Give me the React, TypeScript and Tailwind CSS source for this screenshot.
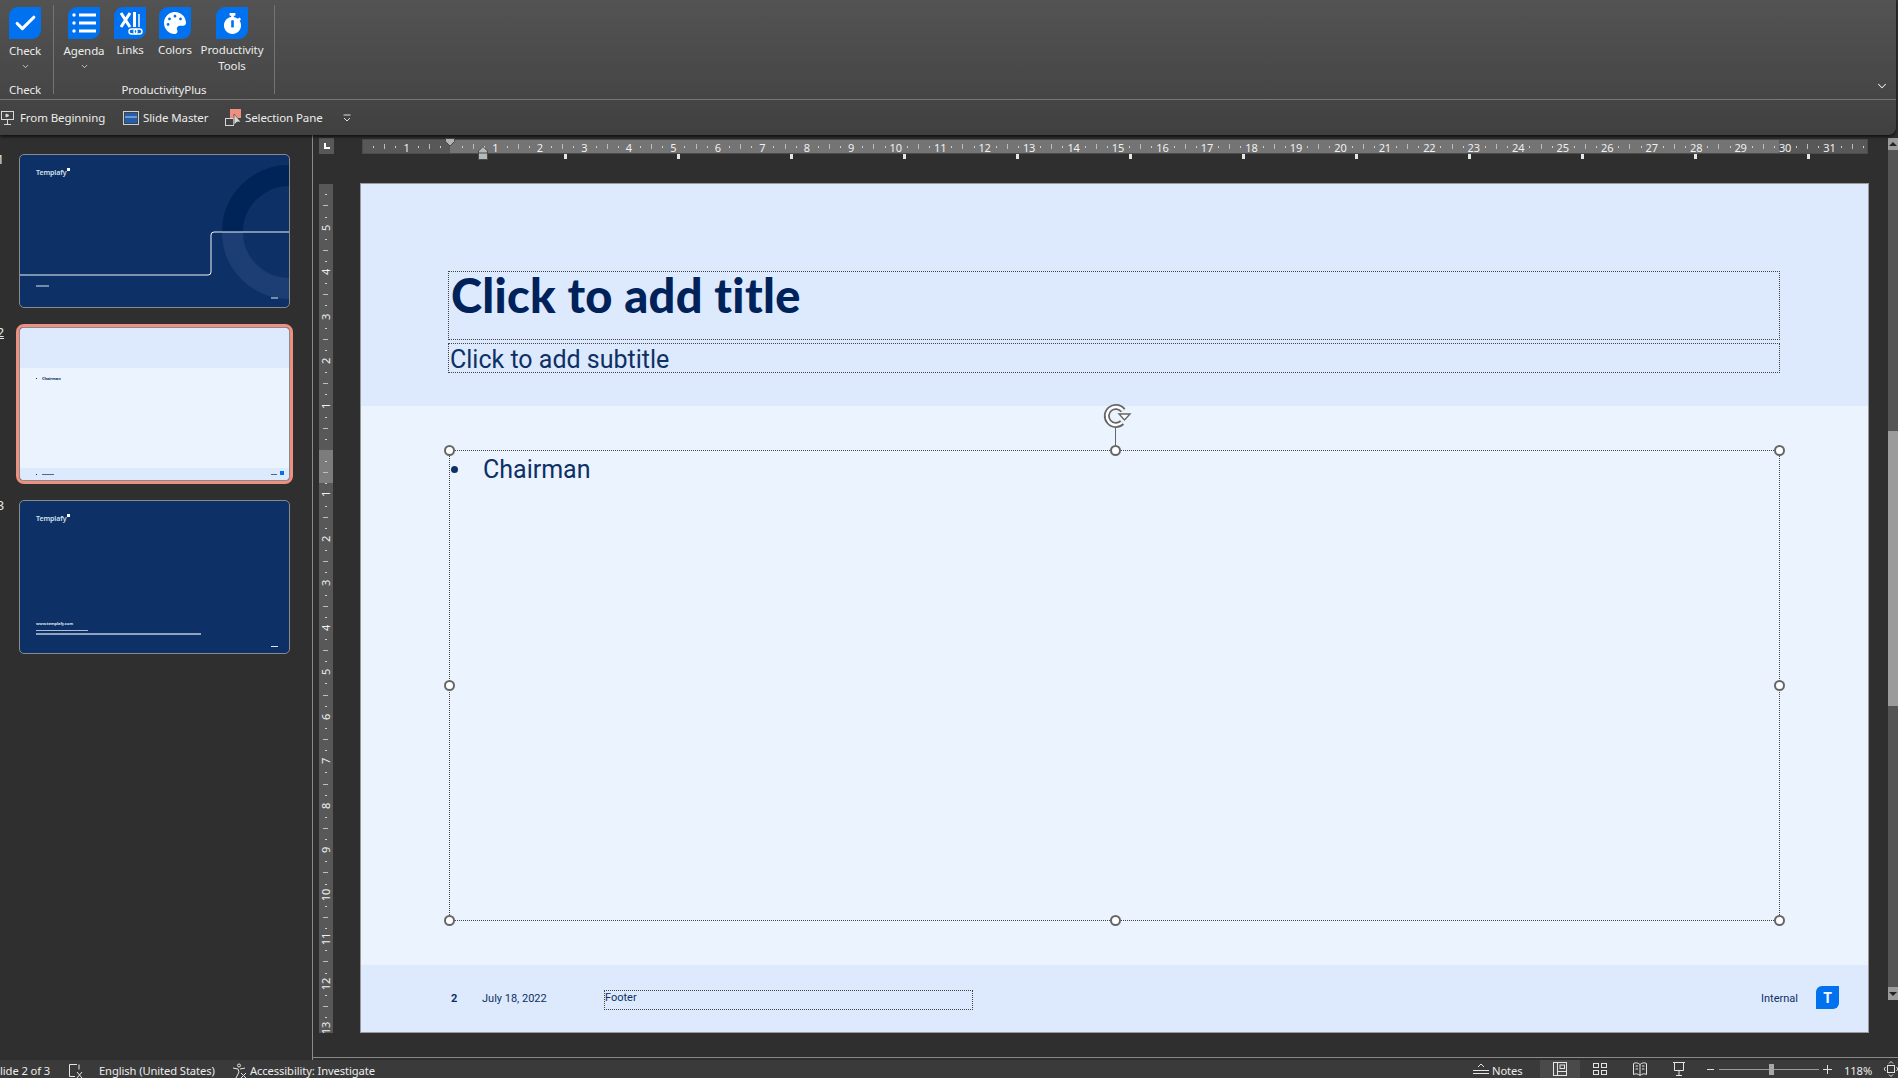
import React from 'react';
import { ChevronDown, Check } from 'lucide-react';
import { FaPalette, FaStopwatch } from 'react-icons/fa';

const CM = 44.47;

const BlueIcon = ({ children }: { children: React.ReactNode }) => (
  <div className="w-8 h-8 shrink-0 flex items-center justify-center bg-[#0072f0] rounded-tl-[9px] rounded-br-[9px] text-white">
    {children}
  </div>
);

const RibbonButton = ({ width, label, second, chevron, icon }: { width: string; label: string; second?: string; chevron?: boolean; icon: React.ReactNode }) => (
  <div className={`flex flex-col items-center pt-[7px] leading-4 ${width}`}>
    {icon}
    <span className={chevron ? 'mt-1' : 'mt-[3px]'}>{label}</span>
    {second && <span>{second}</span>}
    {chevron && <ChevronDown size={9} strokeWidth={2} className="mt-[3px]" />}
  </div>
);

const HorizontalRuler = () => {
  const zero = 88;
  const marks: React.ReactNode[] = [];
  for (let k = -2; k <= 31; k++) {
    const x = zero + k * CM;
    if (k !== 0 && x > 0) {
      marks.push(
        <span key={`n${k}`} className="absolute top-0 w-5 -ml-2.5 text-center text-[11px] leading-[15px] text-[#f0f0f0]" style={{ left: x }}>
          {Math.abs(k)}
        </span>
      );
    }
    [0.25, 0.5, 0.75].forEach((f) => {
      const tx = Math.round(x + f * CM);
      if (tx < 4 || tx > 1500) return;
      marks.push(
        <span
          key={`t${k}${f}`}
          className={f === 0.5 ? 'absolute top-[4px] h-[5px] w-px bg-[#bdbdbd]' : 'absolute top-[6px] h-[2px] w-px bg-[#cfcfcf]'}
          style={{ left: tx }}
        />
      );
    });
  }
  return (
    <div className="relative h-[15px] w-[1506px] ml-[2px] bg-[#585858] border border-[#4c4c4c] box-border">
      <div className="absolute top-0 bottom-0 left-[87px] w-[1329px] bg-[#747474]" />
      {marks}
    </div>
  );
};

const VerticalRuler = () => {
  const zero = 266;
  const marks: React.ReactNode[] = [];
  for (let k = -6; k <= 13; k++) {
    const y = zero + k * CM;
    if (k !== 0 && y > 0 && y < 846) {
      marks.push(
        <span key={`n${k}`} className="absolute left-0 w-[14px] h-4 -mt-2 -rotate-90 text-center text-[11px] leading-4 text-[#f0f0f0]" style={{ top: y }}>
          {Math.abs(k)}
        </span>
      );
    }
    [0.25, 0.5, 0.75].forEach((f) => {
      const ty = Math.round(y + f * CM);
      if (ty < 4 || ty > 844) return;
      marks.push(
        <span
          key={`t${k}${f}`}
          className={f === 0.5 ? 'absolute left-[4px] w-[5px] h-px bg-[#bdbdbd]' : 'absolute left-[6px] w-[2px] h-px bg-[#cfcfcf]'}
          style={{ top: ty }}
        />
      );
    });
  }
  return (
    <div className="relative w-[14px] h-[849px] bg-[#585858]">
      <div className="absolute left-0 right-0 top-[266px] h-[33px] bg-[#7c7c7c]" />
      {marks}
    </div>
  );
};

const Handle = ({ className }: { className: string }) => (
  <span className={`absolute w-[11px] h-[11px] rounded-full bg-white border-2 border-[#666666] ${className}`} />
);

const Logo = () => (
  <span className="absolute left-[16px] top-[13px] text-[7px] leading-[9px] font-semibold text-[#d8e0ec]">
    Templafy<span className="inline-block w-[3px] h-[3px] bg-white ml-px align-top" />
  </span>
);

const Thumb = ({ num, selected, children, className }: { num: string; selected?: boolean; children: React.ReactNode; className: string }) => (
  <div
    className={`relative w-[271px] h-[154px] ml-[19px] rounded-[5px] border border-[#8a8a8a] ${className} ${
      selected ? 'outline-[3px] outline-[#ee907f]' : ''
    }`}
  >
    <span className={`absolute right-[calc(100%+16px)] -top-[4px] text-[13px] leading-4 text-[#e6e6e6] ${selected ? 'underline' : ''}`}>{num}</span>
    <div className="absolute inset-0 overflow-hidden rounded-[4px]">{children}</div>
  </div>
);

const StatusIcon = ({ children }: { children: React.ReactNode }) => (
  <svg width="16" height="16" viewBox="0 0 16 16" fill="none" stroke="#e4e4e4" strokeWidth="1">
    {children}
  </svg>
);

export default function App() {
  const tabStops = [0, 1, 2, 3, 4, 5, 6, 7, 8, 9, 10, 11];

  return (
    <div className="w-[1898px] h-[1078px] overflow-hidden flex flex-col bg-[#2f2f2f] text-[11.5px] tracking-[-0.1px] text-[#ececec] font-['Noto_Sans','Open_Sans',sans-serif]">
      {/* Ribbon */}
      <div className="relative z-10 h-[135px] shrink-0 w-[1896px] rounded-br-lg bg-gradient-to-b from-[#535353] to-[#404040] shadow-[0_2px_3px_rgba(0,0,0,0.6)]">
        <div className="relative h-[100px] border-b border-[#767676] flex">
          <div className="w-[54px] h-[89px] mt-[5px] border-r border-[#747474] flex flex-col relative">
            <div className="-mt-[5px]">
              <RibbonButton width="w-[50px]" label="Check" chevron icon={<BlueIcon><Check size={25} strokeWidth={3} /></BlueIcon>} />
            </div>
            <span className="absolute bottom-[-4px] left-0 w-[50px] text-center leading-4">Check</span>
          </div>
          <div className="w-[221px] h-[89px] mt-[5px] border-r border-[#747474] relative flex pl-[7px]">
            <div className="flex -mt-[5px]">
              <RibbonButton
                width="w-[46px]"
                label="Agenda"
                chevron
                icon={
                  <BlueIcon>
                    <svg width="26" height="22" viewBox="0 0 26 22" fill="white">
                      <circle cx="3" cy="3" r="1.7" />
                      <circle cx="3" cy="11" r="1.7" />
                      <circle cx="3" cy="19" r="1.7" />
                      <rect x="8" y="1.5" width="17" height="3" />
                      <rect x="8" y="9.5" width="17" height="3" />
                      <rect x="8" y="17.5" width="17" height="3" />
                    </svg>
                  </BlueIcon>
                }
              />
              <RibbonButton
                width="w-[46px]"
                label="Links"
                icon={
                  <BlueIcon>
                    <svg width="30" height="30" viewBox="0 0 30 30" fill="none">
                      <path d="M6 5 L15 19 M15 5 L6 19" stroke="white" strokeWidth="3" />
                      <rect x="18" y="4" width="3" height="15" fill="white" />
                      <rect x="23" y="6" width="2" height="13" fill="#bcd8ff" />
                      <rect x="14" y="21" width="8" height="5" rx="2.5" stroke="white" strokeWidth="1.4" />
                      <rect x="19" y="21" width="8" height="5" rx="2.5" stroke="white" strokeWidth="1.4" />
                    </svg>
                  </BlueIcon>
                }
              />
              <RibbonButton width="w-[44px]" label="Colors" icon={<BlueIcon><FaPalette size={22} /></BlueIcon>} />
              <RibbonButton width="w-[70px]" label="Productivity" second="Tools" icon={<BlueIcon><FaStopwatch size={21} /></BlueIcon>} />
            </div>
            <span className="absolute bottom-[-4px] left-0 right-0 text-center leading-4">ProductivityPlus</span>
          </div>
          <ChevronDown size={14} strokeWidth={1.8} className="absolute left-[1875px] top-[79px]" />
        </div>

        {/* Quick access */}
        <div className="h-[35px] flex items-center leading-4">
          <svg width="14" height="16" viewBox="0 0 14 16" fill="none" stroke="#d8d8d8" className="ml-px">
            <rect x="0.5" y="1.5" width="12" height="8" />
            <path d="M6.5 10v4M3 14.5h7" />
            <path d="M5 4l3 1.5L5 7z" fill="#d8d8d8" />
          </svg>
          <span className="ml-[5px] w-[85px] whitespace-nowrap">From Beginning</span>
          <svg width="16" height="14" viewBox="0 0 16 14" className="ml-[18px]">
            <rect x="0.5" y="0.5" width="15" height="13" fill="none" stroke="#d0d0d0" />
            <rect x="2" y="2" width="12" height="10" fill="#1f5fb4" />
            <path d="M2 6h12" stroke="#d0d0d0" />
          </svg>
          <span className="ml-[4px] w-[64px] whitespace-nowrap">Slide Master</span>
          <svg width="18" height="18" viewBox="0 0 18 18" className="ml-[18px]">
            <rect x="5" y="0" width="11" height="9" fill="#ee907f" />
            <rect x="0.5" y="9.5" width="8" height="7" fill="none" stroke="#d8d8d8" />
            <path d="M9 5l0 11 3-3 4 0z" fill="#d8d8d8" stroke="#333" strokeWidth="0.6" />
          </svg>
          <span className="ml-[2px] w-[77px] whitespace-nowrap">Selection Pane</span>
          <svg width="8" height="8" viewBox="0 0 8 8" fill="none" stroke="#e0e0e0" className="ml-[21px]">
            <path d="M0.5 1h7M1 4l3 3 3-3" />
          </svg>
        </div>
      </div>

      {/* Workspace */}
      <div className="h-[925px] shrink-0 flex">
        {/* Slide thumbnails */}
        <div className="w-[313px] shrink-0 border-r border-[#8a8a8a] pt-[19px] flex flex-col gap-[19px] overflow-hidden">
          <Thumb num="1" className="bg-[#0d3066]">
            <svg width="269" height="152" viewBox="0 0 269 152" fill="none" className="absolute inset-0">
              <path d="M212.5 77A56.5 56.5 0 0 1 271 20.5" stroke="#012458" strokeWidth="21" />
              <path d="M212.5 77A56.5 56.5 0 0 0 271 133.5" stroke="#1c3e75" strokeWidth="21" />
              <path d="M0 120H188a3 3 0 0 0 3-3V80a3 3 0 0 1 3-3H271" stroke="#f0f4fa" strokeWidth="1" />
              <path d="M16 131h13M251 143h7" stroke="#e0e6ef" strokeWidth="1" />
            </svg>
            <Logo />
          </Thumb>
          <Thumb num="2" selected className="bg-[#ebf3fe]">
            <div className="absolute top-0 left-0 right-0 h-[40px] bg-[#dde9fc]" />
            <div className="absolute bottom-0 left-0 right-0 h-[12px] bg-[#dde9fc]" />
            <span className="absolute left-[22px] top-[48px] text-[4px] leading-[6px] font-bold text-[#0d3066]">Chairman</span>
            <span className="absolute left-[16px] top-[50px] w-[1px] h-[1px] bg-[#0d3066]" />
            <span className="absolute left-[16px] top-[146px] w-[1px] h-px bg-[#0d3066]" />
            <span className="absolute left-[22px] top-[146px] w-[12px] h-px bg-[#51688f]" />
            <span className="absolute left-[251px] top-[146px] w-[6px] h-px bg-[#51688f]" />
            <span className="absolute left-[260px] top-[143px] w-[4px] h-[4px] bg-[#0072f0]" />
          </Thumb>
          <Thumb num="3" className="bg-[#0d3066]">
            <Logo />
            <span className="absolute left-[16px] top-[120px] text-[4px] leading-[6px] font-bold text-[#dfe5ef]">www.templafy.com</span>
            <div className="absolute left-[16px] top-[129px] h-px w-[52px] bg-[#aebcd2]" />
            <div className="absolute left-[16px] top-[132px] h-[2px] w-[165px] bg-[#8fa2c0]" />
            <div className="absolute left-[251px] top-[145px] h-px w-[7px] bg-[#dfe5ef]" />
          </Thumb>
        </div>

        {/* Editing area */}
        <div className="flex-1 h-[923px] border-b border-[#8a8a8a] flex overflow-hidden">
          <div className="w-[47px] shrink-0 pl-[6px] pt-[3px]">
            <div className="w-[15px] h-[16px] bg-[#585858] flex items-center justify-center">
              <span className="w-[6px] h-[6px] border-l-2 border-b-2 border-white" />
            </div>
            <div className="mt-[30px]">
              <VerticalRuler />
            </div>
          </div>

          <div className="w-[1509px] shrink-0 relative pt-1">
            <HorizontalRuler />
            {/* Tab stops under the ruler */}
            {tabStops.map((n) => (
              <span key={n} className="absolute top-[19px] w-[3px] h-[5px] bg-[#e6e6e6]" style={{ left: 204 + n * 113 }} />
            ))}
            <svg width="10" height="9" viewBox="0 0 10 9" className="absolute left-[85px] top-[3px]">
              <path d="M0.5 0.5h9v3L5 8 0.5 3.5z" fill="#b4b4b4" stroke="#4a4a4a" />
            </svg>
            <svg width="10" height="14" viewBox="0 0 10 14" className="absolute left-[118px] top-[11px]">
              <path d="M5 0.5L9.5 5v8.5h-9V5z" fill="#b4bab8" stroke="#4a4a4a" />
              <path d="M0.5 7h9" stroke="#4a4a4a" />
            </svg>

            {/* Slide */}
            <div className="mt-[29px] w-[1509px] h-[850px] border border-[#9a9a9a] flex flex-col bg-[#ebf3fe] text-[#0d3066] tracking-normal font-['Roboto',sans-serif]">
              <div className="h-[222px] shrink-0 bg-[#dde9fc] pl-[87px] pt-[87px]">
                <div className="w-[1332px] h-[69px] border border-dotted border-[#444444] pl-[2px] font-['Lato',sans-serif] font-black text-[47px] leading-[46px] tracking-[0.3px] text-[#00225a]">
                  Click to add title
                </div>
                <div className="mt-[3px] w-[1332px] h-[30px] border border-dotted border-[#444444] pl-px pt-px text-[25px] leading-[29px]">
                  Click to add subtitle
                </div>
              </div>

              <div className="flex-1 pl-[88px] pt-[44px]">
                <div className="relative w-[1331px] h-[471px] border border-dotted border-[#444444] flex items-start text-[25px] leading-[30px]">
                  <span className="mt-[15px] ml-px w-[7px] h-[7px] rounded-full bg-[#0d3066]" />
                  <span className="ml-[25px] mt-[4px]">Chairman</span>

                  <Handle className="-left-[6px] -top-[6px]" />
                  <Handle className="left-[660px] -top-[6px]" />
                  <Handle className="-right-[6px] -top-[6px]" />
                  <Handle className="-left-[6px] top-[229px]" />
                  <Handle className="-right-[6px] top-[229px]" />
                  <Handle className="-left-[6px] -bottom-[6px]" />
                  <Handle className="left-[660px] -bottom-[6px]" />
                  <Handle className="-right-[6px] -bottom-[6px]" />

                  <span className="absolute left-[665px] -top-[25px] w-px h-[20px] bg-[#666666]" />
                  <svg width="30" height="26" viewBox="0 0 30 26" fill="none" className="absolute left-[652px] -top-[48px]">
                    <path d="M21 7.5A9 9 0 1 0 20 19.5" stroke="#666666" strokeWidth="6" />
                    <path d="M21 7.5A9 9 0 1 0 20 19.5" stroke="#ffffff" strokeWidth="2.4" />
                    <path d="M17 11h11l-5.5 6z" fill="#ffffff" stroke="#666666" strokeWidth="1.4" />
                  </svg>
                </div>
              </div>

              <div className="h-[67px] shrink-0 bg-[#dde9fc] flex items-center pl-[90px] pr-[29px] text-[11px] leading-[14px]">
                <span className="font-bold w-[31px]">2</span>
                <span className="w-[122px] mt-px">July 18, 2022</span>
                <div className="w-[369px] h-[20px] self-start mt-[25px] pt-px border border-dotted border-[#444444] leading-[12px]">Footer</div>
                <span className="ml-auto">Internal</span>
                <span className="ml-[18px] w-[23px] h-[23px] flex items-center justify-center bg-[#0072f0] rounded-tl-[6px] rounded-br-[6px] text-white text-[14px] font-bold -mt-[2px]">
                  T
                </span>
              </div>
            </div>
          </div>

          {/* Vertical scrollbar */}
          <div className="flex-1 pl-[19px] pt-[3px]">
            <div className="w-[10px] h-[862px] flex flex-col bg-[#555555]">
              <div className="h-[12px] bg-[#9b9b9b] flex items-center justify-center">
                <span className="border-x-[4px] border-x-transparent border-b-[4px] border-b-[#222222]" />
              </div>
              <div className="mt-[281px] h-[275px] bg-[#9b9b9b]" />
              <div className="mt-auto h-[13px] bg-[#9b9b9b] flex items-center justify-center">
                <span className="border-x-[4px] border-x-transparent border-t-[4px] border-t-[#222222]" />
              </div>
            </div>
          </div>
        </div>
      </div>

      {/* Status bar */}
      <div className="h-[18px] shrink-0 bg-[#3a3a3a] flex items-center leading-4 pt-[3px] text-[11.2px]">
        <span className="-ml-[6px] w-[55px] whitespace-nowrap">Slide 2 of 3</span>
        <div className="ml-[19px]">
          <StatusIcon>
            <path d="M9 1.5H1.5v12H7M9 9l5 6M14 9l-5 6M11 1.5v5" />
          </StatusIcon>
        </div>
        <span className="ml-[15px] w-[117px] whitespace-nowrap">English (United States)</span>
        <div className="ml-[16px]">
          <StatusIcon>
            <circle cx="7" cy="2.5" r="1.5" />
            <path d="M1 5l5 1 1 3-3 6M13 5l-5 1M9 10l5 5M14 10l-5 5" />
          </StatusIcon>
        </div>
        <span className="ml-[2px] whitespace-nowrap">Accessibility: Investigate</span>

        <div className="ml-auto flex items-center -mt-[3px]">
          <svg width="16" height="12" viewBox="0 0 16 12" fill="none" stroke="#e4e4e4">
            <path d="M0 7.5h16M0 10.5h16M5 4l3-3 3 3" />
          </svg>
          <span className="ml-[3px] w-[48px] pt-[3px]">Notes</span>
          <div className="w-[40px] h-[18px] bg-[#4a4a4a] flex items-center justify-center">
            <StatusIcon>
              <rect x="1.5" y="1.5" width="13" height="13" />
              <path d="M5.5 1.5v13M5.5 10.5h9" />
              <rect x="8" y="4" width="4.5" height="3.5" />
            </StatusIcon>
          </div>
          <div className="w-[40px] flex justify-center">
            <StatusIcon>
              <rect x="1.5" y="2.5" width="5" height="4" />
              <rect x="9.5" y="2.5" width="5" height="4" />
              <rect x="1.5" y="9.5" width="5" height="4" />
              <rect x="9.5" y="9.5" width="5" height="4" />
            </StatusIcon>
          </div>
          <div className="w-[39px] flex justify-center">
            <StatusIcon>
              <path d="M8 3.5C6 1.5 3 1.5 1.5 2.5v11C3 12.5 6 12.5 8 14.5c2-2 5-2 6.5-1v-11C13 1.5 10 1.5 8 3.5zM8 3.5v11M3.5 5h2.5M3.5 8h2.5M10 5h2.5M10 8h2.5" />
            </StatusIcon>
          </div>
          <div className="w-[40px] flex justify-center">
            <StatusIcon>
              <path d="M2 1.5h12M3.5 1.5v8h9v-8M8 9.5v5M5 14.5h6" />
            </StatusIcon>
          </div>
          <span className="ml-[8px] w-[7px] h-px bg-[#e0e0e0]" />
          <div className="relative ml-[5px] w-[100px] h-px bg-[#9a9a9a]">
            <span className="absolute left-[50px] -top-[5px] w-[5px] h-[11px] bg-[#a8a8a8]" />
          </div>
          <svg width="9" height="9" viewBox="0 0 9 9" stroke="#e0e0e0" className="ml-[4px]">
            <path d="M0 4.5h9M4.5 0v9" />
          </svg>
          <span className="ml-[12px] w-[40px] pt-[3px]">118%</span>
          <svg width="14" height="16" viewBox="0 0 14 16" fill="none" stroke="#e4e4e4">
            <rect x="3.5" y="4.5" width="7" height="7" />
            <path d="M5 2.5l2-2 2 2M5 13.5l2 2 2-2M1.5 6L0 8l1.5 2M12.5 6L14 8l-1.5 2" />
          </svg>
        </div>
      </div>
    </div>
  );
}
